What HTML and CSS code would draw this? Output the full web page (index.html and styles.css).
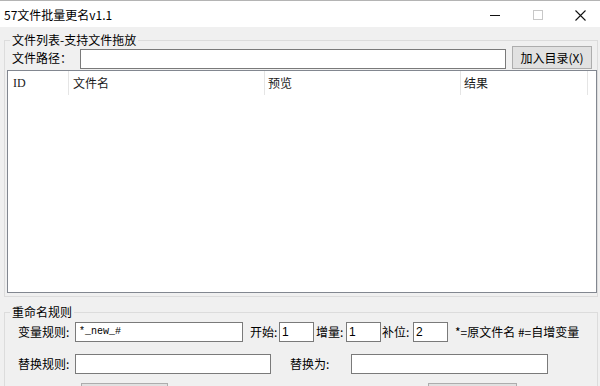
FILE: index.html
```html
<!DOCTYPE html>
<html>
<head>
<meta charset="utf-8">
<link rel="stylesheet" href="styles.css">
</head>
<body>
<div class="window">
  <div class="titlebar">
    <span class="title">57文件批量更名v1.1</span>
    <div class="caption">
      <span class="cbtn"><svg width="10" height="10" viewBox="0 0 10 10"><path d="M0 5.5H10" stroke="#111" stroke-width="1"/></svg></span>
      <span class="cbtn"><svg width="10" height="10" viewBox="0 0 10 10"><rect x="0.5" y="0.5" width="9" height="9" fill="none" stroke="#c8c8c8" stroke-width="1"/></svg></span>
      <span class="cbtn"><svg width="11" height="11" viewBox="0 0 11 11"><path d="M0.5 0.5L10.5 10.5M10.5 0.5L0.5 10.5" stroke="#111" stroke-width="1.1"/></svg></span>
    </div>
  </div>

  <fieldset class="group g1">
    <legend>文件列表-支持文件拖放</legend>
    <div class="pathrow">
      <span class="lbl lbl-path">文件路径：</span>
      <div class="tb tb-path"></div>
      <div class="btn btn-add">加入目录(X)</div>
    </div>
    <div class="list">
      <div class="lhead">
        <div class="col c1">ID</div>
        <div class="col c2">文件名</div>
        <div class="col c3">预览</div>
        <div class="col c4">结果</div>
      </div>
    </div>
  </fieldset>

  <fieldset class="group g2">
    <legend>重命名规则</legend>
    <div class="row row1">
      <span class="lbl lbl-rule">变量规则:</span>
      <div class="tb tb-rule mono">*_new_#</div>
      <span class="lbl lbl-start">开始:</span>
      <div class="tb tb-num">1</div>
      <span class="lbl lbl-inc">增量:</span>
      <div class="tb tb-num">1</div>
      <span class="lbl lbl-pad">补位:</span>
      <div class="tb tb-num">2</div>
      <span class="note">*=原文件名 #=自增变量</span>
    </div>
    <div class="row row2">
      <span class="lbl lbl-rule">替换规则:</span>
      <div class="tb tb-rep"></div>
      <span class="lbl lbl-to">替换为:</span>
      <div class="tb tb-to"></div>
    </div>
    <div class="row row3">
      <div class="btn btn-a"></div>
      <div class="btn btn-b"></div>
    </div>
  </fieldset>
</div>
</body>
</html>
```

FILE: styles.css
```css
* { box-sizing: border-box; }
html, body { margin: 0; padding: 0; }
body {
  width: 600px;
  height: 386px;
  overflow: hidden;
  font-family: "Noto Sans CJK SC", "Microsoft YaHei", sans-serif;
  font-size: 12px;
  color: #000;
}
.window {
  width: 600px;
  height: 386px;
  background: #f0f0f0;
  overflow: hidden;
}
.titlebar {
  height: 27px;
  background: #fff;
  border-top: 1px solid #b4b4b4;
  display: flex;
  align-items: center;
}
.title {
  margin-left: 4px;
  font-size: 12px;
  line-height: 16px;
  margin-top: 2px;
}
.caption {
  margin-left: auto;
  margin-right: -2px;
  display: flex;
  height: 26px;
}
.cbtn {
  width: 43px;
  height: 26px;
  display: flex;
  align-items: center;
  justify-content: center;
  padding-top: 2px;
}
.group {
  margin: 7px 2px 0 4px;
  padding: 0;
  border: 1px solid #dcdcdc;
  min-width: 0;
}
.group legend {
  margin-left: 5px;
  padding: 0 2px;
  font-size: 12px;
  line-height: 12px;
  height: 12px;
}
.pathrow {
  display: flex;
  align-items: flex-start;
  height: 23px;
}
.lbl {
  display: block;
  white-space: nowrap;
  line-height: 20px;
}
.lbl-path {
  margin-left: 7px;
  width: 68px;
  line-height: 24px;
}
.tb {
  background: #fff;
  border: 1px solid #7a7a7a;
  height: 20px;
  line-height: 18px;
  padding-left: 2px;
  font-size: 12px;
  font-family: "Liberation Sans", "Noto Sans CJK SC", sans-serif;
}
.tb-path {
  width: 426px;
  margin-top: 3px;
}
.btn {
  background: #e1e1e1;
  border: 1px solid #adadad;
  height: 23px;
  line-height: 21px;
  text-align: center;
  font-size: 12px;
}
.btn-add {
  width: 80px;
  margin-left: 6px;
}
.list {
  margin: 1px 0 3px 2px;
  width: 590px;
  height: 223px;
  background: #fff;
  border: 1px solid #828790;
}
.lhead {
  display: flex;
  height: 24px;
}
.col {
  border-right: 1px solid #e5e5e5;
  line-height: 24px;
  padding-left: 3px;
  font-size: 12px;
  color: #1a1a1a;
}
.c1 { width: 61px; padding-left: 5px; font-family: "Liberation Serif", serif; }
.c2 { width: 196px; padding-left: 4px; }
.c3 { width: 196px; }
.c4 { width: 127px; }
.g2 {
  margin-top: 9px;
  height: 120px;
}
.row {
  display: flex;
  align-items: center;
  height: 20px;
}
.row1 { margin-top: 4px; }
.row2 { margin-top: 12px; }
.row3 { margin-top: 9px; height: 23px; align-items: flex-start; }
.lbl-rule { margin-left: 13px; width: 57px; }
.tb-rule { width: 168px; }
.mono {
  font-family: "Liberation Mono", monospace;
  font-size: 10px;
  padding-left: 3px;
}
.lbl-start { margin-left: 7px; width: 29px; }
.tb-num { width: 35px; }
.lbl-inc { margin-left: 2px; width: 30px; }
.lbl-pad { margin-left: 1px; width: 31px; }
.note { margin-left: 7px; white-space: nowrap; line-height: 20px; }
.tb-rep { width: 196px; }
.lbl-to { margin-left: 19px; width: 61px; }
.tb-to { width: 197px; }
.btn-a { margin-left: 76px; width: 87px; }
.btn-b { margin-left: 260px; width: 89px; }
```
